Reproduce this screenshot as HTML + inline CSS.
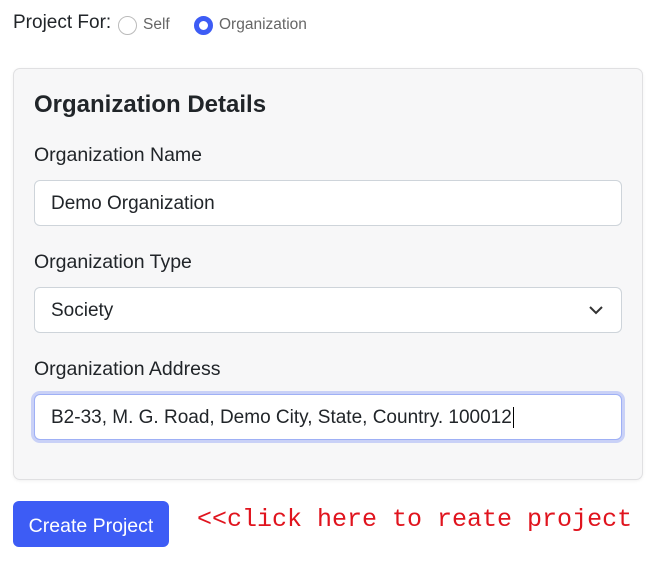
<!DOCTYPE html>
<html><head><style>
body{margin:0;background:#fff;font-family:"Liberation Sans",sans-serif;color:#212529;width:661px;height:568px;position:relative;overflow:hidden}
.a{position:absolute}
.lbl{font-size:19.5px;color:#212529}
.inp{position:absolute;left:34px;width:588px;height:46px;border:1px solid #ced4da;border-radius:6px;background:#fff;box-sizing:border-box;font-size:19px;line-height:46px;padding-left:16px}
</style></head><body>
<div class="a" style="left:13px;top:12px;font-size:19px">Project For:</div>
<div class="a" style="left:118px;top:16px;width:19px;height:19px;border:1px solid #bbb;border-radius:50%;box-sizing:border-box"></div>
<div class="a" style="left:143px;top:16px;font-size:15.5px;color:#666">Self</div>
<div class="a" style="left:194px;top:16px;width:19px;height:19px;border:5px solid #3d5cf5;border-radius:50%;box-sizing:border-box;background:#fff"></div>
<div class="a" style="left:219px;top:16px;font-size:15.5px;color:#666">Organization</div>
<div class="a" style="left:13px;top:68px;width:630px;height:412px;background:#f7f7f8;border:1px solid #e0e0e2;border-radius:7px;box-sizing:border-box;box-shadow:0 1px 3px rgba(0,0,0,.06)"></div>
<div class="a" style="left:34px;top:91px;font-size:24px;font-weight:bold">Organization Details</div>
<div class="a lbl" style="left:34px;top:144px">Organization Name</div>
<div class="inp" style="top:180px">Demo Organization</div>
<div class="a lbl" style="left:34px;top:251px">Organization Type</div>
<div class="inp" style="top:287px">Society
<svg style="position:absolute;right:18px;top:17px" width="14" height="10" viewBox="0 0 14 10"><path d="M1 2l6 6 6-6" fill="none" stroke="#333" stroke-width="2"/></svg></div>
<div class="a lbl" style="left:34px;top:358px">Organization Address</div>
<div class="inp" style="top:394px;border-color:#9fb0f5;box-shadow:0 0 0 3px #c9d1f7">B2-33, M. G. Road, Demo City, State, Country. 100012<span style="border-left:1px solid #000;margin-left:1px"></span></div>
<div class="a" style="left:13px;top:501px;width:156px;height:46px;background:#3d5cf5;border-radius:6px;color:#fff;font-size:19.5px;line-height:50px;text-align:center">Create Project</div>
<div class="a" style="left:197px;top:505px;font-family:'Liberation Mono',monospace;font-size:25px;color:#e0141e">&lt;&lt;click here to reate project</div>
</body></html>
